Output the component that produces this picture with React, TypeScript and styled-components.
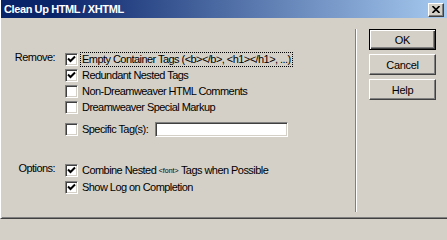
import React from 'react';
import styled, { createGlobalStyle } from 'styled-components';

const GlobalStyle = createGlobalStyle`
  html, body {
    margin: 0;
    padding: 0;
    background: #d4d0c8;
  }
  body {
    font-family: "Liberation Sans", Arial, sans-serif;
    font-size: 11px;
    color: #000;
  }
`;

const Window = styled.div`
  width: 447px;
  height: 219px;
  box-sizing: border-box;
  background: #d4d0c8;
  border-left: 1px solid #ffffff;
  border-bottom: 1px solid #404040;
  box-shadow: inset 1px 0 #d4d0c8, inset 0 -1px #808080;
  display: flex;
  flex-direction: column;
  overflow: hidden;
  letter-spacing: -0.55px;
`;

const TitleBar = styled.div`
  height: 18px;
  margin-left: -1px;
  display: flex;
  align-items: center;
  justify-content: space-between;
  padding: 0 3px 0 4px;
  background: linear-gradient(to right, #0a246a 0%, #0a246a 12%, #a6caf0 100%);
`;

const Title = styled.span`
  color: #fff;
  font-weight: bold;
  font-size: 11px;
  letter-spacing: -0.4px;
  line-height: 18px;
`;

const CloseButton = styled.div`
  width: 16px;
  height: 14px;
  box-sizing: border-box;
  margin-top: 1px;
  background: #d4d0c8;
  border: 1px solid;
  border-color: #ffffff #404040 #404040 #ffffff;
  box-shadow: inset -1px -1px #808080;
  display: flex;
  align-items: center;
  justify-content: center;
`;

const Body = styled.div`
  flex: 1;
  display: flex;
`;

const Main = styled.div`
  width: 354px;
  padding-top: 33px;
  display: flex;
  flex-direction: column;
`;

const Group = styled.div<{ $gap?: number }>`
  display: grid;
  grid-template-columns: 54px 1fr;
  column-gap: 10px;
  margin-top: ${(p) => p.$gap ?? 0}px;
`;

const GroupLabel = styled.div`
  text-align: right;
  line-height: 11px;
  padding-top: 1px;
`;

const List = styled.div`
  display: flex;
  flex-direction: column;
`;

const Row = styled.div<{ $h?: number; $gap?: number }>`
  height: ${(p) => p.$h ?? 16}px;
  margin-top: ${(p) => p.$gap ?? 0}px;
  display: flex;
  align-items: center;
  white-space: nowrap;
`;

const Box = styled.span`
  width: 13px;
  height: 13px;
  box-sizing: border-box;
  flex: none;
  background: #fff;
  border: 1px solid;
  border-color: #808080 #ffffff #ffffff #808080;
  box-shadow: inset 1px 1px #404040, inset -1px -1px #d4d0c8;
  display: flex;
  align-items: center;
  justify-content: center;
`;

const Label = styled.span<{ $focused?: boolean }>`
  margin-left: 3px;
  padding: 0 1px;
  line-height: 13px;
  outline: ${(p) => (p.$focused ? '1px dotted #000' : 'none')};
`;

const Small = styled.span`
  font-size: 7px;
  letter-spacing: 0;
  vertical-align: 1px;
`;

const TextField = styled.div`
  width: 133px;
  height: 15px;
  box-sizing: border-box;
  margin-left: 6px;
  background: #fff;
  border: 1px solid;
  border-color: #808080 #ffffff #ffffff #808080;
  box-shadow: inset 1px 1px #404040, inset -1px -1px #d4d0c8;
`;

const Divider = styled.div`
  width: 1px;
  margin: 11px 0 6px;
  background: #ffffff;
  border-left: 1px solid #808080;
`;

const ButtonColumn = styled.div`
  padding: 11px 0 0 12px;
  display: flex;
  flex-direction: column;
  gap: 4px;
`;

const Button = styled.div<{ $default?: boolean }>`
  width: 67px;
  height: 21px;
  box-sizing: border-box;
  display: flex;
  align-items: center;
  justify-content: center;
  letter-spacing: -0.3px;
  background: #d4d0c8;
  border: 1px solid;
  border-color: ${(p) => (p.$default ? '#000' : '#ffffff #404040 #404040 #ffffff')};
  box-shadow: ${(p) =>
    p.$default
      ? 'inset 1px 1px #ffffff, inset -1px -1px #404040, inset -2px -2px #808080'
      : 'inset -1px -1px #808080'};
`;

const Check = () => (
  <svg width="9" height="9" viewBox="0 0 9 9">
    <path d="M1 3.5 L3.5 6 L8 1.5" stroke="#000" strokeWidth="2" fill="none" />
  </svg>
);

const Checkbox: React.FC<{ checked?: boolean }> = ({ checked }) => (
  <Box>{checked && <Check />}</Box>
);

export default function App() {
  return (
    <>
      <GlobalStyle />
      <Window>
        <TitleBar>
          <Title>Clean Up HTML / XHTML</Title>
          <CloseButton>
            <svg width="8" height="7" viewBox="0 0 8 7">
              <path d="M0.5 0 L7.5 7 M7.5 0 L0.5 7" stroke="#000" strokeWidth="1.6" />
            </svg>
          </CloseButton>
        </TitleBar>
        <Body>
          <Main>
            <Group>
              <GroupLabel>Remove:</GroupLabel>
              <List>
                <Row>
                  <Checkbox checked />
                  <Label $focused>Empty Container Tags (&lt;b&gt;&lt;/b&gt;, &lt;h1&gt;&lt;/h1&gt;, ...)</Label>
                </Row>
                <Row>
                  <Checkbox checked />
                  <Label>Redundant Nested Tags</Label>
                </Row>
                <Row>
                  <Checkbox />
                  <Label>Non-Dreamweaver HTML Comments</Label>
                </Row>
                <Row>
                  <Checkbox />
                  <Label>Dreamweaver Special Markup</Label>
                </Row>
                <Row $h={17} $gap={6}>
                  <Checkbox />
                  <Label>Specific Tag(s):</Label>
                  <TextField />
                </Row>
              </List>
            </Group>
            <Group $gap={24}>
              <GroupLabel>Options:</GroupLabel>
              <List>
                <Row $h={17}>
                  <Checkbox checked />
                  <Label>
                    Combine Nested <Small>&lt;font&gt;</Small> Tags when Possible
                  </Label>
                </Row>
                <Row $h={17}>
                  <Checkbox checked />
                  <Label>Show Log on Completion</Label>
                </Row>
              </List>
            </Group>
          </Main>
          <Divider />
          <ButtonColumn>
            <Button $default>OK</Button>
            <Button>Cancel</Button>
            <Button>Help</Button>
          </ButtonColumn>
        </Body>
      </Window>
    </>
  );
}
